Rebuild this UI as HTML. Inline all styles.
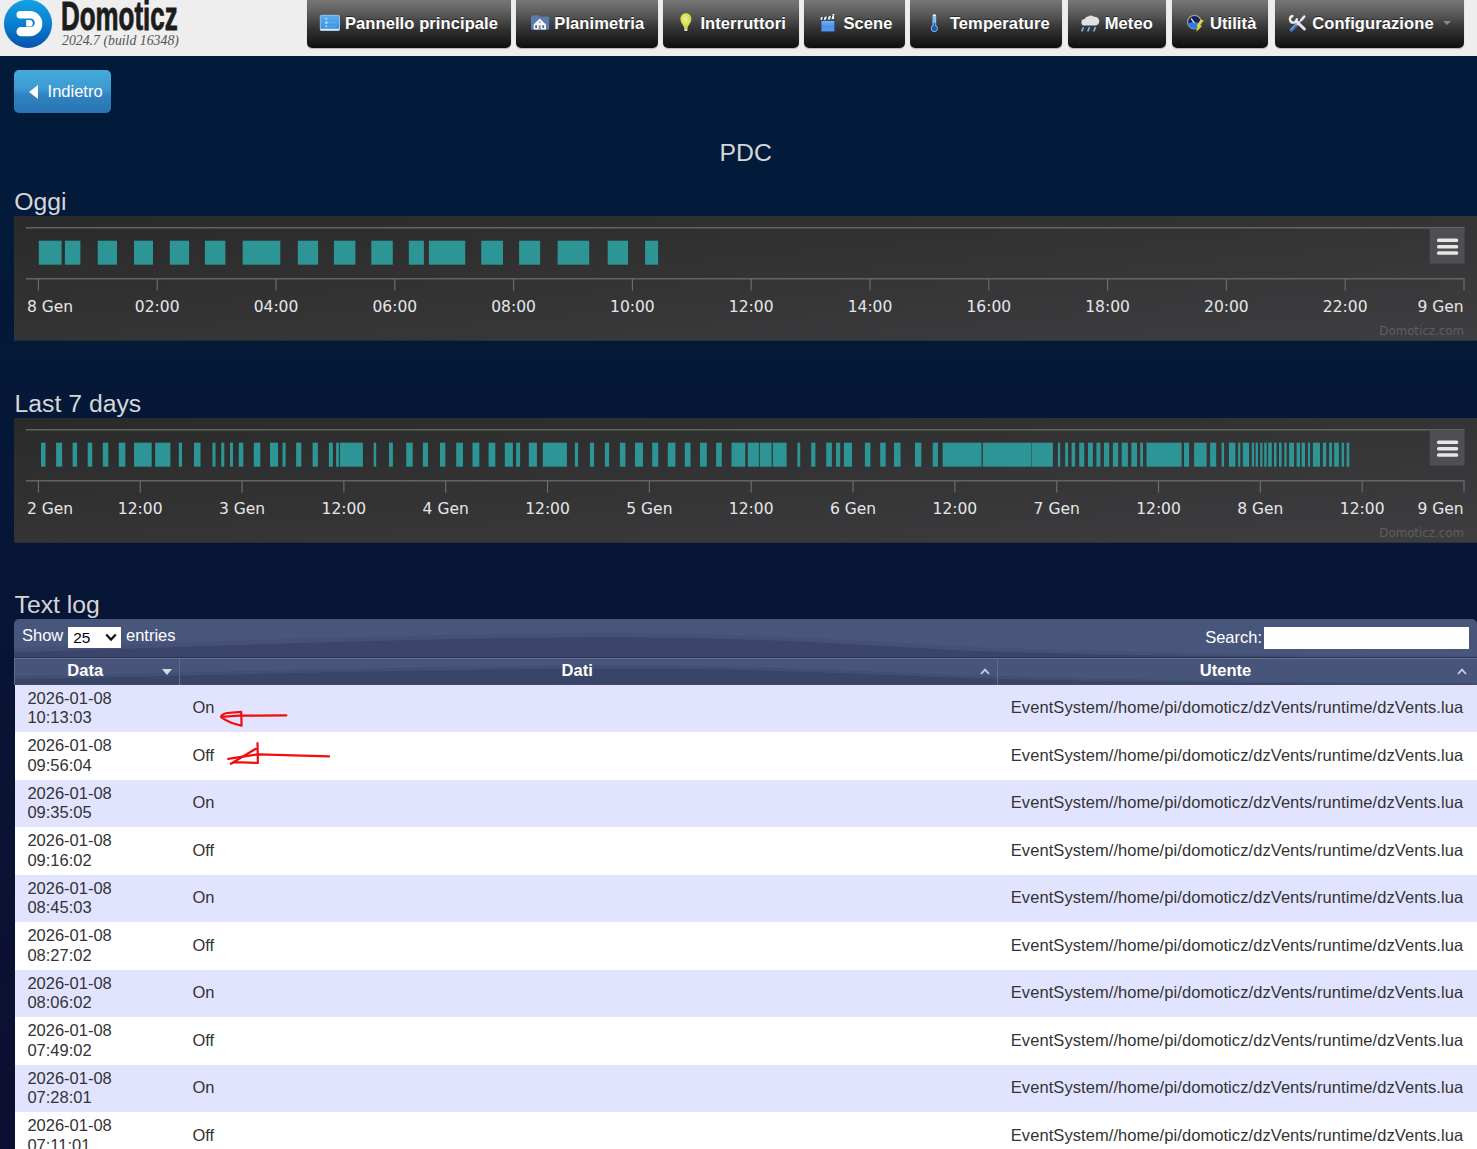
<!DOCTYPE html>
<html lang="it"><head><meta charset="utf-8"><title>Domoticz</title>
<style>
html,body{margin:0;padding:0}
body{width:1477px;height:1149px;overflow:hidden;position:relative;font-family:"Liberation Sans",Arial,sans-serif;font-size:16.5px;color:#333;
background:linear-gradient(180deg,#021b3a 0px,#021b3a 150px,#0c1032 1000px,#0c0f30 1149px)}
#hdr{position:absolute;left:0;top:0;width:1477px;height:55.7px;background:#eeeeee}
#logo{position:absolute;left:0;top:0}
#ttl{position:absolute;left:60.8px;top:-6.6px;font-weight:bold;font-size:40.4px;line-height:46px;color:#1c1c1c;-webkit-text-stroke:0.9px #1c1c1c;transform-origin:0 0;transform:scaleX(0.642);white-space:nowrap;letter-spacing:0}
#ver{position:absolute;left:62px;top:31.5px;font-family:"Liberation Serif",serif;font-style:italic;font-size:13.8px;line-height:18px;color:#555;white-space:nowrap}
.nb{position:absolute;top:0;height:47.8px;border-radius:0 0 5px 5px;background:linear-gradient(180deg,#777 0%,#5e5e5e 25%,#333 60%,#0e0e0e 100%);box-sizing:border-box;white-space:nowrap;color:#fff;font-weight:bold;font-size:16.5px;line-height:46px;letter-spacing:0.1px;text-shadow:0 -1px 0 rgba(0,0,0,.5);box-shadow:0 1px 1px rgba(0,0,0,.25)}
.nb .ic{position:absolute;left:13px;top:15px;width:20px;height:16px;display:block;line-height:0}
.nb .nt{position:absolute;left:37.6px;top:0}
.caret{position:absolute;right:13px;top:21px;width:0;height:0;border-left:4.5px solid transparent;border-right:4.5px solid transparent;border-top:4.5px solid #8a8a8a}
#back{position:absolute;left:14px;top:70px;width:97px;height:43px;border-radius:5px;background:linear-gradient(180deg,#46aadb 0%,#3d9bd1 42%,#3084c1 58%,#2a72b1 100%);color:#fff;font-size:16.5px;line-height:43px}
#back i{position:absolute;left:14.8px;top:15.4px;width:0;height:0;border-top:7.4px solid transparent;border-bottom:7.4px solid transparent;border-right:9.6px solid #fff}
#back span{position:absolute;left:33.6px;top:0}
h2{position:absolute;margin:0;font-weight:normal;font-size:24.75px;line-height:28px;color:#d6d6d6;white-space:nowrap}
.chart{position:absolute;left:14px;display:block}
.ax{font-family:"DejaVu Sans","Liberation Sans",sans-serif;font-size:15.5px;fill:#e6e6e9}
.cr{font-family:"DejaVu Sans","Liberation Sans",sans-serif;font-size:11.8px;fill:#5e5e62}
#tb{position:absolute;z-index:0;left:14px;top:619.4px;width:1462.6px;height:38.6px;color:#fff;font-size:16.5px}
#tbbg{position:absolute;left:14px;top:619.4px;width:1462.6px;height:38.8px;border-radius:5px 5px 0 0;background:#49567b}
#thbg{position:absolute;left:14px;top:658.2px;width:1462.6px;height:26.4px;background:#48557b}
#tb span{position:absolute;white-space:nowrap;line-height:20px}
#sel{position:absolute;left:53.7px;top:7.5px;width:53.3px;height:21.2px;background:#fff;color:#000}
#srch{position:absolute;left:1249.7px;top:7.3px;width:205.8px;height:22.3px;background:#fff}
#th{position:absolute;left:14px;top:658.2px;width:1462.6px;height:26.4px;color:#fff;font-weight:bold;font-size:16.5px;border-top:1px solid #667093;box-sizing:border-box}
#th div{position:absolute;top:0;height:25.4px;line-height:23.6px;text-align:center;box-sizing:border-box;border-left:1px solid #626c90}
table{position:absolute;left:15px;top:684.6px;width:1461.6px;border-collapse:collapse;border-spacing:0;table-layout:fixed}
td{padding:0 13.2px 0 12.4px;height:47.5px;line-height:19.8px;vertical-align:middle;font-size:16.5px;color:#333;white-space:nowrap}
tr.odd td{background:#e2e4ff}
tr.even td{background:#fff}
td.c1{width:164.4px;box-sizing:border-box}
td.c2{width:818.6px;box-sizing:border-box;padding-left:13px}
td.c3{letter-spacing:0.07px;padding-left:12.8px}
#ann{position:absolute;left:0;top:0;pointer-events:none}
</style></head><body>
<div id="hdr">
<svg id="logo" width="56" height="52" viewBox="0 0 56 52"><defs><linearGradient id="lg" x1="0" y1="0" x2="0" y2="1"><stop offset="0" stop-color="#12a3e6"/><stop offset="0.5" stop-color="#0a7fd0"/><stop offset="1" stop-color="#0552b0"/></linearGradient></defs>
<circle cx="28" cy="23.8" r="24.1" fill="url(#lg)"/>
<path d="M20.2 11.1 H29.8 A12.55 12.55 0 0 1 29.8 36.2 H20.6 A4.1 4.5 0 0 1 20.6 27.1 H30.5 A4.25 4.25 0 0 0 30.5 18.6 H20.2 A3.7 3.75 0 0 1 20.2 11.1 Z" fill="#fff"/>
<path d="M26.2 19.9 H29.4 A3.35 3.35 0 0 1 29.4 26.6 H26.2 Z" fill="#fff"/>
</svg>
<div id="ttl">Domoticz</div>
<div id="ver">2024.7 (build 16348)</div>
<div class="nb" style="left:307.3px;width:203.8px"><span class="nt" style="left:37.6px">Pannello principale</span></div>
<div class="nb" style="left:516.4px;width:141.4px"><span class="nt" style="left:37.9px">Planimetria</span></div>
<div class="nb" style="left:663.1px;width:135.7px"><span class="nt" style="left:37.3px">Interruttori</span></div>
<div class="nb" style="left:804.4px;width:100.7px"><span class="nt" style="left:39.0px">Scene</span></div>
<div class="nb" style="left:910.3px;width:151.4px"><span class="nt" style="left:39.6px">Temperature</span></div>
<div class="nb" style="left:1067.5px;width:98.2px"><span class="nt" style="left:37.2px">Meteo</span></div>
<div class="nb" style="left:1171.5px;width:96.8px"><span class="nt" style="left:38.4px">Utilità</span></div>
<div class="nb" style="left:1274.5px;width:189.2px"><span class="nt" style="left:37.7px">Configurazione</span><span class="caret"></span></div>
<svg id="nico" width="1477" height="56" viewBox="0 0 1477 56" style="position:absolute;left:0;top:0">
<defs>
<linearGradient id="gd" x1="0" y1="0" x2="0" y2="1"><stop offset="0" stop-color="#58aef0"/><stop offset="1" stop-color="#3b8fdc"/></linearGradient>
<linearGradient id="gs" x1="0" y1="0" x2="0" y2="1"><stop offset="0" stop-color="#7ab6f5"/><stop offset="0.55" stop-color="#4a90e6"/><stop offset="1" stop-color="#5a9cea"/></linearGradient>
<radialGradient id="gb" cx="0.45" cy="0.4" r="0.7"><stop offset="0" stop-color="#eef0a0"/><stop offset="0.6" stop-color="#d4dc48"/><stop offset="1" stop-color="#b9c334"/></radialGradient>
</defs>
<!-- dashboard -->
<g><rect x="320.3" y="15.3" width="19.2" height="15" rx="1.2" fill="url(#gd)" stroke="#9accf2" stroke-width="0.9"/><rect x="320.2" y="28.8" width="19.4" height="1.7" fill="#dbe9f9"/><rect x="325.3" y="17.8" width="2" height="1.8" fill="#a8d8f8"/><rect x="325.3" y="21.6" width="2.2" height="2" fill="#c8ecfc"/><rect x="325.3" y="25.4" width="2" height="1.8" fill="#a8d8f8"/><rect x="329" y="18.2" width="7" height="0.9" fill="#55a8ee"/><rect x="329" y="22.2" width="7" height="0.9" fill="#6ab8f2"/><rect x="329" y="26" width="7" height="0.9" fill="#55a8ee"/></g>
<!-- planimetria -->
<g><path d="M531 17.2 Q531 16 532.4 16 L533 15.2 H538.6 L539.4 16.4 H547.8 Q549.1 16.4 549.1 17.8 V28.6 Q549.1 29.8 547.8 29.8 H532.2 Q531 29.8 531 28.6 Z" fill="#5b7aad"/><path d="M539.7 18.6 L546 24.6 V29.6 H533.6 V24.6 Z" fill="#f4f6fa"/><rect x="538.7" y="25.2" width="2.1" height="4.4" fill="#7d8fd0"/><rect x="535.2" y="25.3" width="1.8" height="2.6" fill="#4c6a55"/><rect x="542.3" y="25.3" width="1.8" height="2.6" fill="#4c6a55"/><circle cx="539.8" cy="22.2" r="0.8" fill="#778"/></g>
<!-- bulb -->
<g><path d="M685.9 13.3 C689.4 13.3 691.4 15.9 691.4 18.9 C691.4 22.6 688.2 24.6 687.4 28.8 H684.4 C683.6 24.6 680.4 22.6 680.4 18.9 C680.4 15.9 682.4 13.3 685.9 13.3 Z" fill="url(#gb)"/><path d="M684.4 28.4 H687.4 V30.8 Q685.9 32.6 684.4 30.8 Z" fill="#e4e0e8"/><path d="M684.2 31 Q685.9 33.2 687.6 31 Z" fill="#111"/></g>
<!-- scene -->
<g><rect x="821" y="20.4" width="13.8" height="11.4" fill="url(#gs)" stroke="#1f4272" stroke-width="0.8"/><path d="M820 17.2 L833.8 15.4 L834.3 19 L820.5 20.2 Z" fill="#2a3448"/><path d="M820.6 17.2 L823 16.9 L822 20 L820.6 20.1 Z M824.6 16.7 L827 16.4 L826 19.7 L823.6 19.9 Z M828.6 16.2 L831 15.9 L830 19.4 L827.6 19.6 Z M832.4 14.1 H834.3 V15.6 H832.4 Z M832.2 16 L834 15.6 L834.2 19 L831.4 19.2 Z" fill="#f2f2ee"/></g>
<!-- temperature -->
<g><path d="M932.5 15.8 Q932.5 14 934.4 14 Q936.2 14 936.2 15.8 V25.6 A3.5 3.5 0 1 1 932.5 25.6 Z" fill="#8cc6f6"/><path d="M932.9 15.4 Q934.4 13.4 935.9 15.4 V16 H932.9 Z" fill="#f4f8fc"/><circle cx="934.4" cy="28.6" r="2.6" fill="#1b5fae"/><rect x="933.6" y="22.6" width="1.7" height="5" fill="#1b5fae"/><path d="M932.7 17.6 h1.6 M932.7 19.6 h1.6 M932.7 21.6 h1.6" stroke="#5a9fe0" stroke-width="0.6"/></g>
<!-- meteo -->
<g><path d="M1084.6 25.6 A3.3 3.3 0 0 1 1084.8 19 A3.6 3.6 0 0 1 1088.2 16.6 A3.9 3.9 0 0 1 1094 16.8 A4.4 4.4 0 0 1 1095.6 25.6 Z" fill="#dfe0e0"/><path d="M1083.2 27.8 l-1.2 3 M1089.2 27.8 l-1.2 3 M1095.2 27.8 l-1.2 3" stroke="#8cb6d2" stroke-width="1.7" stroke-linecap="round"/><path d="M1085.8 27.4 l-1.6 4 M1091.8 27.4 l-1.6 4" stroke="#1c4666" stroke-width="1.4"/></g>
<!-- utility -->
<g><circle cx="1194.4" cy="22.1" r="6.8" fill="#1b2050" stroke="#9a9a9e" stroke-width="1.3"/><path d="M1188.2 23.6 A6.3 6.3 0 0 0 1200.6 23.6 Q1194.4 20.5 1188.2 23.6 Z" fill="#2f7fe2"/><path d="M1191.4 18.8 L1193.9 22.4" stroke="#e8f4f4" stroke-width="1.2" stroke-linecap="round"/><path d="M1200.6 19.4 L1203.8 20.6 L1199.6 25.2 L1202 25.9 L1196.2 31.9 L1197.6 26.6 L1196.6 26 Z" fill="#e8d632"/></g>
<!-- config -->
<g><path d="M1296.6 24.8 L1291.4 30" stroke="#3f6fc0" stroke-width="3.6" stroke-linecap="round"/><path d="M1295.8 24.4 L1290.9 29.3" stroke="#a8c4ee" stroke-width="1" stroke-linecap="round"/><path d="M1304.2 16.8 L1297.2 24.4" stroke="#e6e2ee" stroke-width="1.5" stroke-linecap="round"/><path d="M1304.2 16.6 L1301.4 19.8" stroke="#e6e2ee" stroke-width="2.6" stroke-linecap="round"/><path d="M1296.2 21.2 L1304.4 29" stroke="#e3e6f2" stroke-width="3" stroke-linecap="round"/><path d="M1292.4 16 A3.4 3.4 0 1 0 1296.8 19.2" fill="none" stroke="#ecece4" stroke-width="2.4" stroke-linecap="round"/></g>
</svg>
</div>
<div id="back"><i></i><span>Indietro</span></div>
<h2 style="left:719.6px;top:139.2px">PDC</h2>
<h2 style="left:14.3px;top:188.1px">Oggi</h2>
<svg class="chart" style="top:216.2px" width="1463" height="125" viewBox="0 0 1463 125">
<defs><linearGradient id="bg216" x1="0" y1="0" x2="1" y2="1"><stop offset="0" stop-color="#2a2a2b"/><stop offset="1" stop-color="#3e3e40"/></linearGradient></defs>
<rect x="0" y="0" width="1463" height="124.7" fill="url(#bg216)"/>
<rect x="11.8" y="11.2" width="1438.8" height="1.2" fill="#707072"/>
<rect x="11.8" y="62.2" width="1438.8" height="1.2" fill="#707072"/>
<rect x="23.85" y="63" width="1.1" height="11.6" fill="#707072"/>
<rect x="142.65" y="63" width="1.1" height="11.6" fill="#707072"/>
<rect x="261.45" y="63" width="1.1" height="11.6" fill="#707072"/>
<rect x="380.25" y="63" width="1.1" height="11.6" fill="#707072"/>
<rect x="499.05" y="63" width="1.1" height="11.6" fill="#707072"/>
<rect x="617.85" y="63" width="1.1" height="11.6" fill="#707072"/>
<rect x="736.65" y="63" width="1.1" height="11.6" fill="#707072"/>
<rect x="855.45" y="63" width="1.1" height="11.6" fill="#707072"/>
<rect x="974.25" y="63" width="1.1" height="11.6" fill="#707072"/>
<rect x="1093.05" y="63" width="1.1" height="11.6" fill="#707072"/>
<rect x="1211.85" y="63" width="1.1" height="11.6" fill="#707072"/>
<rect x="1330.65" y="63" width="1.1" height="11.6" fill="#707072"/>
<rect x="1449.45" y="63" width="1.1" height="11.6" fill="#707072"/>
<rect x="24.8" y="24.7" width="22.8" height="24" fill="#2d9595"/>
<rect x="50.9" y="24.7" width="15.5" height="24" fill="#2d9595"/>
<rect x="83.7" y="24.7" width="19.3" height="24" fill="#2d9595"/>
<rect x="120.0" y="24.7" width="19.0" height="24" fill="#2d9595"/>
<rect x="155.8" y="24.7" width="19.3" height="24" fill="#2d9595"/>
<rect x="190.9" y="24.7" width="20.5" height="24" fill="#2d9595"/>
<rect x="228.7" y="24.7" width="37.6" height="24" fill="#2d9595"/>
<rect x="283.8" y="24.7" width="20.3" height="24" fill="#2d9595"/>
<rect x="319.9" y="24.7" width="21.5" height="24" fill="#2d9595"/>
<rect x="357.3" y="24.7" width="21.5" height="24" fill="#2d9595"/>
<rect x="394.8" y="24.7" width="15.1" height="24" fill="#2d9595"/>
<rect x="414.9" y="24.7" width="36.3" height="24" fill="#2d9595"/>
<rect x="467.2" y="24.7" width="21.8" height="24" fill="#2d9595"/>
<rect x="505.1" y="24.7" width="21.0" height="24" fill="#2d9595"/>
<rect x="543.6" y="24.7" width="31.6" height="24" fill="#2d9595"/>
<rect x="593.7" y="24.7" width="20.3" height="24" fill="#2d9595"/>
<rect x="631.1" y="24.7" width="13.0" height="24" fill="#2d9595"/>
<text x="13.0" y="95.6" text-anchor="start" class="ax">8 Gen</text>
<text x="143.2" y="95.6" text-anchor="middle" class="ax">02:00</text>
<text x="262.0" y="95.6" text-anchor="middle" class="ax">04:00</text>
<text x="380.8" y="95.6" text-anchor="middle" class="ax">06:00</text>
<text x="499.6" y="95.6" text-anchor="middle" class="ax">08:00</text>
<text x="618.4" y="95.6" text-anchor="middle" class="ax">10:00</text>
<text x="737.2" y="95.6" text-anchor="middle" class="ax">12:00</text>
<text x="856.0" y="95.6" text-anchor="middle" class="ax">14:00</text>
<text x="974.8" y="95.6" text-anchor="middle" class="ax">16:00</text>
<text x="1093.6" y="95.6" text-anchor="middle" class="ax">18:00</text>
<text x="1212.4" y="95.6" text-anchor="middle" class="ax">20:00</text>
<text x="1331.2" y="95.6" text-anchor="middle" class="ax">22:00</text>
<text x="1449.6" y="95.6" text-anchor="end" class="ax">9 Gen</text>
<text x="1449.9" y="118.6" text-anchor="end" class="cr">Domoticz.com</text>
<rect x="1415.7" y="13" width="34.9" height="34.6" fill="#4f4f53"/>
<rect x="1423.0" y="22.5" width="21.2" height="3.5" rx="1.6" fill="#e6e6e6"/>
<rect x="1423.0" y="29" width="21.2" height="3.5" rx="1.6" fill="#e6e6e6"/>
<rect x="1423.0" y="35.3" width="21.2" height="3.5" rx="1.6" fill="#e6e6e6"/>
</svg>
<h2 style="left:14.6px;top:390.1px">Last 7 days</h2>
<svg class="chart" style="top:418.2px" width="1463" height="125" viewBox="0 0 1463 125">
<defs><linearGradient id="bg418" x1="0" y1="0" x2="1" y2="1"><stop offset="0" stop-color="#2a2a2b"/><stop offset="1" stop-color="#3e3e40"/></linearGradient></defs>
<rect x="0" y="0" width="1463" height="124.7" fill="url(#bg418)"/>
<rect x="11.8" y="11.2" width="1438.8" height="1.2" fill="#707072"/>
<rect x="11.8" y="62.2" width="1438.8" height="1.2" fill="#707072"/>
<rect x="23.85" y="63" width="1.1" height="11.6" fill="#707072"/>
<rect x="125.68" y="63" width="1.1" height="11.6" fill="#707072"/>
<rect x="227.51" y="63" width="1.1" height="11.6" fill="#707072"/>
<rect x="329.34" y="63" width="1.1" height="11.6" fill="#707072"/>
<rect x="431.16" y="63" width="1.1" height="11.6" fill="#707072"/>
<rect x="532.99" y="63" width="1.1" height="11.6" fill="#707072"/>
<rect x="634.82" y="63" width="1.1" height="11.6" fill="#707072"/>
<rect x="736.65" y="63" width="1.1" height="11.6" fill="#707072"/>
<rect x="838.48" y="63" width="1.1" height="11.6" fill="#707072"/>
<rect x="940.31" y="63" width="1.1" height="11.6" fill="#707072"/>
<rect x="1042.14" y="63" width="1.1" height="11.6" fill="#707072"/>
<rect x="1143.96" y="63" width="1.1" height="11.6" fill="#707072"/>
<rect x="1245.79" y="63" width="1.1" height="11.6" fill="#707072"/>
<rect x="1347.62" y="63" width="1.1" height="11.6" fill="#707072"/>
<rect x="1449.45" y="63" width="1.1" height="11.6" fill="#707072"/>
<rect x="27.0" y="24.7" width="4.5" height="24" fill="#2d9595"/>
<rect x="42.1" y="24.7" width="6.0" height="24" fill="#2d9595"/>
<rect x="58.6" y="24.7" width="4.5" height="24" fill="#2d9595"/>
<rect x="73.7" y="24.7" width="4.5" height="24" fill="#2d9595"/>
<rect x="88.8" y="24.7" width="5.5" height="24" fill="#2d9595"/>
<rect x="104.8" y="24.7" width="6.5" height="24" fill="#2d9595"/>
<rect x="120.0" y="24.7" width="17.7" height="24" fill="#2d9595"/>
<rect x="141.1" y="24.7" width="15.3" height="24" fill="#2d9595"/>
<rect x="164.8" y="24.7" width="3.2" height="24" fill="#2d9595"/>
<rect x="180.0" y="24.7" width="6.5" height="24" fill="#2d9595"/>
<rect x="198.5" y="24.7" width="3.0" height="24" fill="#2d9595"/>
<rect x="207.2" y="24.7" width="3.1" height="24" fill="#2d9595"/>
<rect x="216.0" y="24.7" width="3.0" height="24" fill="#2d9595"/>
<rect x="224.8" y="24.7" width="4.5" height="24" fill="#2d9595"/>
<rect x="239.8" y="24.7" width="6.5" height="24" fill="#2d9595"/>
<rect x="256.0" y="24.7" width="8.0" height="24" fill="#2d9595"/>
<rect x="268.6" y="24.7" width="3.0" height="24" fill="#2d9595"/>
<rect x="282.1" y="24.7" width="5.2" height="24" fill="#2d9595"/>
<rect x="298.6" y="24.7" width="5.3" height="24" fill="#2d9595"/>
<rect x="314.9" y="24.7" width="4.0" height="24" fill="#2d9595"/>
<rect x="322.1" y="24.7" width="2.8" height="24" fill="#2d9595"/>
<rect x="325.9" y="24.7" width="23.0" height="24" fill="#2d9595"/>
<rect x="359.7" y="24.7" width="2.5" height="24" fill="#2d9595"/>
<rect x="375.0" y="24.7" width="3.9" height="24" fill="#2d9595"/>
<rect x="392.2" y="24.7" width="6.5" height="24" fill="#2d9595"/>
<rect x="408.9" y="24.7" width="5.1" height="24" fill="#2d9595"/>
<rect x="426.0" y="24.7" width="5.3" height="24" fill="#2d9595"/>
<rect x="442.2" y="24.7" width="6.8" height="24" fill="#2d9595"/>
<rect x="458.5" y="24.7" width="6.8" height="24" fill="#2d9595"/>
<rect x="474.6" y="24.7" width="6.7" height="24" fill="#2d9595"/>
<rect x="490.8" y="24.7" width="8.1" height="24" fill="#2d9595"/>
<rect x="502.1" y="24.7" width="4.0" height="24" fill="#2d9595"/>
<rect x="514.8" y="24.7" width="8.1" height="24" fill="#2d9595"/>
<rect x="528.8" y="24.7" width="24.1" height="24" fill="#2d9595"/>
<rect x="560.9" y="24.7" width="3.2" height="24" fill="#2d9595"/>
<rect x="575.9" y="24.7" width="4.2" height="24" fill="#2d9595"/>
<rect x="590.9" y="24.7" width="4.2" height="24" fill="#2d9595"/>
<rect x="605.9" y="24.7" width="5.5" height="24" fill="#2d9595"/>
<rect x="621.0" y="24.7" width="8.0" height="24" fill="#2d9595"/>
<rect x="638.2" y="24.7" width="6.0" height="24" fill="#2d9595"/>
<rect x="653.8" y="24.7" width="7.6" height="24" fill="#2d9595"/>
<rect x="670.8" y="24.7" width="5.7" height="24" fill="#2d9595"/>
<rect x="686.0" y="24.7" width="6.8" height="24" fill="#2d9595"/>
<rect x="702.1" y="24.7" width="5.7" height="24" fill="#2d9595"/>
<rect x="717.5" y="24.7" width="13.8" height="24" fill="#2d9595"/>
<rect x="733.8" y="24.7" width="11.1" height="24" fill="#2d9595"/>
<rect x="745.8" y="24.7" width="11.8" height="24" fill="#2d9595"/>
<rect x="758.8" y="24.7" width="13.8" height="24" fill="#2d9595"/>
<rect x="783.4" y="24.7" width="2.8" height="24" fill="#2d9595"/>
<rect x="797.2" y="24.7" width="4.2" height="24" fill="#2d9595"/>
<rect x="812.2" y="24.7" width="5.7" height="24" fill="#2d9595"/>
<rect x="822.0" y="24.7" width="4.2" height="24" fill="#2d9595"/>
<rect x="829.9" y="24.7" width="8.1" height="24" fill="#2d9595"/>
<rect x="850.9" y="24.7" width="5.5" height="24" fill="#2d9595"/>
<rect x="866.2" y="24.7" width="5.5" height="24" fill="#2d9595"/>
<rect x="880.0" y="24.7" width="6.5" height="24" fill="#2d9595"/>
<rect x="901.0" y="24.7" width="6.3" height="24" fill="#2d9595"/>
<rect x="918.7" y="24.7" width="5.3" height="24" fill="#2d9595"/>
<rect x="928.6" y="24.7" width="38.9" height="24" fill="#2d9595"/>
<rect x="968.8" y="24.7" width="48.3" height="24" fill="#2d9595"/>
<rect x="1017.5" y="24.7" width="21.4" height="24" fill="#2d9595"/>
<rect x="1043.9" y="24.7" width="2.3" height="24" fill="#2d9595"/>
<rect x="1051.1" y="24.7" width="3.0" height="24" fill="#2d9595"/>
<rect x="1057.6" y="24.7" width="3.5" height="24" fill="#2d9595"/>
<rect x="1065.2" y="24.7" width="5.0" height="24" fill="#2d9595"/>
<rect x="1074.0" y="24.7" width="4.9" height="24" fill="#2d9595"/>
<rect x="1082.4" y="24.7" width="4.0" height="24" fill="#2d9595"/>
<rect x="1089.9" y="24.7" width="5.3" height="24" fill="#2d9595"/>
<rect x="1098.9" y="24.7" width="5.3" height="24" fill="#2d9595"/>
<rect x="1107.7" y="24.7" width="6.2" height="24" fill="#2d9595"/>
<rect x="1117.4" y="24.7" width="5.6" height="24" fill="#2d9595"/>
<rect x="1126.2" y="24.7" width="2.8" height="24" fill="#2d9595"/>
<rect x="1132.5" y="24.7" width="35.1" height="24" fill="#2d9595"/>
<rect x="1170.0" y="24.7" width="5.1" height="24" fill="#2d9595"/>
<rect x="1180.1" y="24.7" width="12.5" height="24" fill="#2d9595"/>
<rect x="1196.1" y="24.7" width="6.1" height="24" fill="#2d9595"/>
<rect x="1207.6" y="24.7" width="2.5" height="24" fill="#2d9595"/>
<rect x="1214.9" y="24.7" width="6.5" height="24" fill="#2d9595"/>
<rect x="1224.1" y="24.7" width="2.2" height="24" fill="#2d9595"/>
<rect x="1228.8" y="24.7" width="6.3" height="24" fill="#2d9595"/>
<rect x="1237.8" y="24.7" width="2.3" height="24" fill="#2d9595"/>
<rect x="1241.6" y="24.7" width="2.4" height="24" fill="#2d9595"/>
<rect x="1246.2" y="24.7" width="2.3" height="24" fill="#2d9595"/>
<rect x="1250.2" y="24.7" width="2.5" height="24" fill="#2d9595"/>
<rect x="1254.2" y="24.7" width="3.6" height="24" fill="#2d9595"/>
<rect x="1260.0" y="24.7" width="2.5" height="24" fill="#2d9595"/>
<rect x="1265.0" y="24.7" width="2.6" height="24" fill="#2d9595"/>
<rect x="1270.3" y="24.7" width="2.3" height="24" fill="#2d9595"/>
<rect x="1275.1" y="24.7" width="4.9" height="24" fill="#2d9595"/>
<rect x="1282.6" y="24.7" width="3.4" height="24" fill="#2d9595"/>
<rect x="1287.6" y="24.7" width="3.4" height="24" fill="#2d9595"/>
<rect x="1293.9" y="24.7" width="2.2" height="24" fill="#2d9595"/>
<rect x="1298.9" y="24.7" width="7.1" height="24" fill="#2d9595"/>
<rect x="1308.9" y="24.7" width="3.3" height="24" fill="#2d9595"/>
<rect x="1315.1" y="24.7" width="2.9" height="24" fill="#2d9595"/>
<rect x="1320.1" y="24.7" width="4.8" height="24" fill="#2d9595"/>
<rect x="1327.6" y="24.7" width="2.5" height="24" fill="#2d9595"/>
<rect x="1332.6" y="24.7" width="2.7" height="24" fill="#2d9595"/>
<text x="13.0" y="95.6" text-anchor="start" class="ax">2 Gen</text>
<text x="126.2" y="95.6" text-anchor="middle" class="ax">12:00</text>
<text x="228.1" y="95.6" text-anchor="middle" class="ax">3 Gen</text>
<text x="329.9" y="95.6" text-anchor="middle" class="ax">12:00</text>
<text x="431.7" y="95.6" text-anchor="middle" class="ax">4 Gen</text>
<text x="533.5" y="95.6" text-anchor="middle" class="ax">12:00</text>
<text x="635.4" y="95.6" text-anchor="middle" class="ax">5 Gen</text>
<text x="737.2" y="95.6" text-anchor="middle" class="ax">12:00</text>
<text x="839.0" y="95.6" text-anchor="middle" class="ax">6 Gen</text>
<text x="940.9" y="95.6" text-anchor="middle" class="ax">12:00</text>
<text x="1042.7" y="95.6" text-anchor="middle" class="ax">7 Gen</text>
<text x="1144.5" y="95.6" text-anchor="middle" class="ax">12:00</text>
<text x="1246.3" y="95.6" text-anchor="middle" class="ax">8 Gen</text>
<text x="1348.2" y="95.6" text-anchor="middle" class="ax">12:00</text>
<text x="1449.6" y="95.6" text-anchor="end" class="ax">9 Gen</text>
<text x="1449.9" y="118.6" text-anchor="end" class="cr">Domoticz.com</text>
<rect x="1415.7" y="13" width="34.9" height="34.6" fill="#4f4f53"/>
<rect x="1423.0" y="22.5" width="21.2" height="3.5" rx="1.6" fill="#e6e6e6"/>
<rect x="1423.0" y="29" width="21.2" height="3.5" rx="1.6" fill="#e6e6e6"/>
<rect x="1423.0" y="35.3" width="21.2" height="3.5" rx="1.6" fill="#e6e6e6"/>
</svg>
<h2 style="left:14.6px;top:591.3px">Text log</h2>
<div id="tbbg"></div><div id="thbg"></div>
<svg id="wave" width="1463" height="66" viewBox="14 619 1463 66" style="position:absolute;left:14px;top:619px;pointer-events:none"><defs><clipPath id="cw"><path d="M14 658 V624.4 Q14 619.4 19 619.4 H1471.6 Q1476.6 619.4 1476.6 624.4 V658 Z"/></clipPath></defs>
<g clip-path="url(#cw)"><path d="M14 652.5 C200 647 400 638 600 637.2 C720 637 800 641 950 650 C1100 656 1300 657 1477 657.5 V658 H14 Z" fill="#3b4669"/>
<path d="M14 648 C200 642 400 634 600 633.5 C720 633.5 800 637 950 646 C1100 653 1300 655 1477 656 V658 H14 Z" fill="#3b4669" opacity="0.35"/></g>
<path d="M14 679 C200 676 400 669.5 600 668.6 C720 668.4 800 671 950 677.5 C1100 682 1300 683.6 1476.6 684 V684.6 H14 Z" fill="#3a4567"/>
<path d="M14 676 C200 672.5 400 666.5 600 665.6 C720 665.4 800 668 950 674.5 C1100 679.5 1300 682 1476.6 683 V684.6 H14 Z" fill="#3a4567" opacity="0.35"/>
</svg>
<div style="position:absolute;left:14px;top:657px;width:1462.6px;height:1.2px;background:#2c3552"></div>
<div id="tb"><span style="left:8px;top:6px">Show</span><div id="sel"><span style="left:5.6px;top:0.9px;font-size:15.4px;color:#000">25</span><svg style="position:absolute;left:37.6px;top:6.6px" width="12" height="9" viewBox="0 0 12 9"><path d="M1.2 1.6 L6 6.6 L10.8 1.6" fill="none" stroke="#111" stroke-width="2.2"/></svg></div><span style="left:112px;top:6px">entries</span><span style="left:1191.2px;top:7.6px">Search:</span><div id="srch"></div></div>
<div id="th"><div style="left:0;width:165.4px;padding-right:24px">Data<svg style="position:absolute;left:146.6px;top:9.6px" width="10" height="6" viewBox="0 0 10 6"><path d="M0 0 H10 L5 6 Z" fill="#d8dbe6"/></svg></div><div style="left:165.4px;width:818.6px;padding-right:24px">Dati<svg style="position:absolute;left:799.5px;top:9.2px" width="10" height="7" viewBox="0 0 10 7"><path d="M1 6 L5 1.6 L9 6" fill="none" stroke="#c9cee0" stroke-width="1.8"/></svg></div><div style="left:983.4px;width:479.2px;padding-right:24px">Utente<svg style="position:absolute;left:458.8px;top:9.2px" width="10" height="7" viewBox="0 0 10 7"><path d="M1 6 L5 1.6 L9 6" fill="none" stroke="#c9cee0" stroke-width="1.8"/></svg></div></div>
<table><tbody>
<tr class="odd"><td class="c1">2026-01-08<br>10:13:03</td><td class="c2">On</td><td class="c3">EventSystem//home/pi/domoticz/dzVents/runtime/dzVents.lua</td></tr>
<tr class="even"><td class="c1">2026-01-08<br>09:56:04</td><td class="c2">Off</td><td class="c3">EventSystem//home/pi/domoticz/dzVents/runtime/dzVents.lua</td></tr>
<tr class="odd"><td class="c1">2026-01-08<br>09:35:05</td><td class="c2">On</td><td class="c3">EventSystem//home/pi/domoticz/dzVents/runtime/dzVents.lua</td></tr>
<tr class="even"><td class="c1">2026-01-08<br>09:16:02</td><td class="c2">Off</td><td class="c3">EventSystem//home/pi/domoticz/dzVents/runtime/dzVents.lua</td></tr>
<tr class="odd"><td class="c1">2026-01-08<br>08:45:03</td><td class="c2">On</td><td class="c3">EventSystem//home/pi/domoticz/dzVents/runtime/dzVents.lua</td></tr>
<tr class="even"><td class="c1">2026-01-08<br>08:27:02</td><td class="c2">Off</td><td class="c3">EventSystem//home/pi/domoticz/dzVents/runtime/dzVents.lua</td></tr>
<tr class="odd"><td class="c1">2026-01-08<br>08:06:02</td><td class="c2">On</td><td class="c3">EventSystem//home/pi/domoticz/dzVents/runtime/dzVents.lua</td></tr>
<tr class="even"><td class="c1">2026-01-08<br>07:49:02</td><td class="c2">Off</td><td class="c3">EventSystem//home/pi/domoticz/dzVents/runtime/dzVents.lua</td></tr>
<tr class="odd"><td class="c1">2026-01-08<br>07:28:01</td><td class="c2">On</td><td class="c3">EventSystem//home/pi/domoticz/dzVents/runtime/dzVents.lua</td></tr>
<tr class="even"><td class="c1">2026-01-08<br>07:11:01</td><td class="c2">Off</td><td class="c3">EventSystem//home/pi/domoticz/dzVents/runtime/dzVents.lua</td></tr>
</tbody></table>
<svg id="ann" width="1477" height="1149" viewBox="0 0 1477 1149"><g fill="none" stroke="#f20d0d" stroke-width="2.2" stroke-linecap="round" stroke-linejoin="round">
<path d="M286.3 715.4 L239.6 715.6 L221 716.8 C221.5 715 224 713.6 227 713 L241.2 711.8 L241.6 725.6 C236 724.6 228 722 221.4 717.4"/>
<path d="M329 756.4 L258.5 754.3 L228.2 758.8"/>
<path d="M257.5 743.2 L257.9 762.9 L234.2 762.2 L230.8 763.8 L255.8 748.8"/>
</g></svg>
</body></html>
